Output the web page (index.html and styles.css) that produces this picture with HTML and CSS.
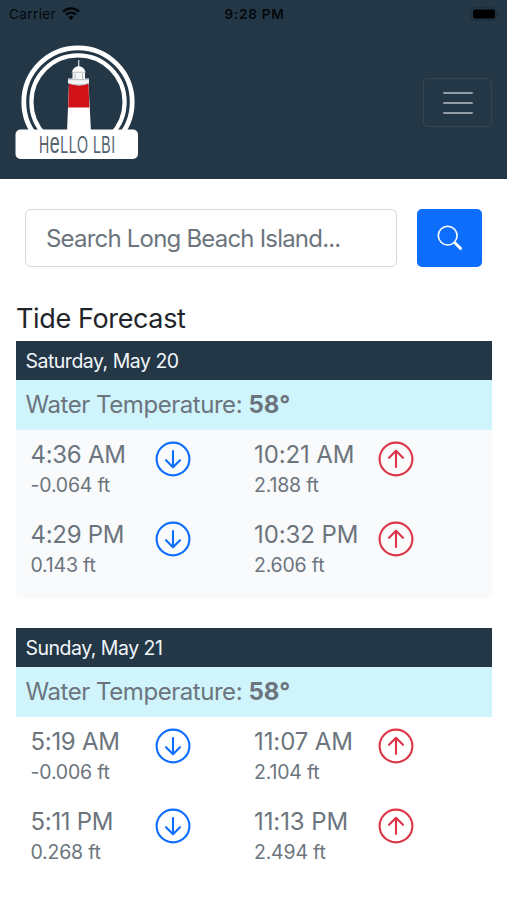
FILE: index.html
```html
<!DOCTYPE html>
<html lang="en">
<head>
<meta charset="utf-8">
<title>Hello LBI</title>
<link rel="stylesheet" href="styles.css">
</head>
<body>
<svg class="symbols" aria-hidden="true">
  <symbol id="down" viewBox="0 0 36 36"><circle cx="18" cy="18" r="16.400"/><path d="M18 10v16M11 19.200l7 7 7-7"/></symbol>
  <symbol id="up" viewBox="0 0 36 36"><circle cx="18" cy="18" r="16.400"/><path d="M18 26V10M11 16.800l7-7 7 7"/></symbol>
</svg>
<header class="navbar">
  <div class="status">
    <div class="carrier"><span>Carrier</span>
      <svg width="18" height="13" viewBox="0 0 18 13"><path d="M1 4.700C5.500.3 12.500.3 17 4.700M4 7.700c3-2.700 7-2.700 10 0" fill="none" stroke="#020609" stroke-width="2.400"/><path d="M6.200 10Q9 7.600 11.800 10L9 12.900z" fill="#020609"/></svg>
    </div>
    <div class="clock">9:28 PM</div>
    <svg class="battery" width="30" height="14" viewBox="0 0 30 14"><rect x=".8" y=".8" width="25.400" height="12.400" rx="4" fill="none" stroke="#1c2c38"/><rect x="3" y="2.600" width="22" height="9" rx="2" fill="#000"/><path d="M28 5q1.500 2 0 4z" fill="#152431"/></svg>
  </div>
  <div class="brand-row">
    <svg class="logo" width="124" height="116" viewBox="0 0 124 116">
      <g fill="none" stroke="#fff"><circle cx="63" cy="57" r="54.200" stroke-width="4.800"/><circle cx="63" cy="57" r="46.600" stroke-width="4.200"/></g>
      <path d="M54 38h19.500l2.500 49H52z" fill="#fff"/>
      <path d="M54 39h19.500l.8 23.500H53.200z" fill="#d01118"/>
      <path d="M63.700 15v8" stroke="#dfe4e7" stroke-width="1.200"/>
      <path d="M57 27q1-5 6.700-6 5.700 1 6.700 6z" fill="#fff"/>
      <path d="M57.500 27h12.500v6.500h4v5q-10.300 4-21-.2v-4.800h4.500z" fill="#f5f6f6"/>
      <path d="M56.500 27.200h14.500M60 28.500v6M67.500 28.500v6M53 34.700h21M53.500 38.300q10 3.400 20 0" fill="none" stroke="#a7afb4" stroke-width=".8"/>
      <rect x=".5" y="84.500" width="122.500" height="29.500" rx="5" fill="#fff"/>
      <text class="logo-text" transform="translate(24 107.500) scale(.6 1)">H<tspan class="logo-e">e</tspan>LLO LBI</text>
    </svg>
    <button class="toggler" aria-label="Menu"><i></i><i></i><i></i></button>
  </div>
</header>
<main>
  <form class="search">
    <input type="text" placeholder="Search Long Beach Island...">
    <button type="button" aria-label="Search"><svg width="26" height="26" viewBox="0 0 26 26"><circle cx="10.700" cy="10.600" r="9.400" fill="none" stroke="#fff" stroke-width="1.600"/><path d="M17.800 17.800l5.700 5.600" stroke="#fff" stroke-width="2.900" stroke-linecap="round"/></svg></button>
  </form>
  <h1>Tide Forecast</h1>
  <section class="day shaded">
    <h2>Saturday, May 20</h2>
    <p class="water">Water Temperature: <b>58°</b></p>
    <div class="tides">
      <div class="tide"><div><div class="time">4:36 AM</div><div class="feet">-0.064 ft</div></div><svg class="low"><use href="#down"/></svg></div>
      <div class="tide"><div><div class="time">10:21 AM</div><div class="feet">2.188 ft</div></div><svg class="high"><use href="#up"/></svg></div>
      <div class="tide"><div><div class="time">4:29 PM</div><div class="feet">0.143 ft</div></div><svg class="low"><use href="#down"/></svg></div>
      <div class="tide"><div><div class="time">10:32 PM</div><div class="feet">2.606 ft</div></div><svg class="high"><use href="#up"/></svg></div>
    </div>
  </section>
  <section class="day">
    <h2>Sunday, May 21</h2>
    <p class="water">Water Temperature: <b>58°</b></p>
    <div class="tides">
      <div class="tide"><div><div class="time">5:19 AM</div><div class="feet">-0.006 ft</div></div><svg class="low"><use href="#down"/></svg></div>
      <div class="tide"><div><div class="time">11:07 AM</div><div class="feet">2.104 ft</div></div><svg class="high"><use href="#up"/></svg></div>
      <div class="tide"><div><div class="time">5:11 PM</div><div class="feet">0.268 ft</div></div><svg class="low"><use href="#down"/></svg></div>
      <div class="tide"><div><div class="time">11:13 PM</div><div class="feet">2.494 ft</div></div><svg class="high"><use href="#up"/></svg></div>
    </div>
  </section>
</main>
</body>
</html>
```
FILE: styles.css
```css
* { box-sizing: border-box; }
body { margin: 0; height: 900px; overflow: hidden; background: #fff; color: #212529; font-family: Inter, sans-serif; }
.symbols { display: none; }
h1, h2, p { margin: 0; font-weight: 400; }
.navbar { height: 179px; background: #243746; }
.status { display: grid; grid-template-columns: 1fr auto 1fr; align-items: center; height: 27px; padding: 0 7px 0 9px; color: #03080c; }
.carrier { display: flex; align-items: center; gap: 6px; font-size: 13.500px; letter-spacing: .4px; }
.clock { font-size: 13.500px; font-weight: 600; letter-spacing: .8px; }
.battery { justify-self: end; }
.brand-row { display: flex; justify-content: space-between; align-items: flex-start; padding: 18px 15px 0; }
.logo-text { font-family: "Liberation Sans", sans-serif; font-size: 23.500px; letter-spacing: .9px; fill: #53616c; }
.logo-e { font-size: 30px; }
.toggler { width: 69px; height: 49px; margin-top: 33px; padding: 0; border: 1.500px solid #344653; border-radius: 5px; background: none; display: flex; flex-direction: column; align-items: center; justify-content: center; gap: 8px; }
.toggler i { width: 30px; height: 2px; background: #929ba3; border-radius: 1px; }
main { padding: 29.500px 15px 0; }
.search { display: flex; gap: 20px; padding: 0 10px; height: 58.500px; }
.search input { width: 372px; padding: 2px 20px 0; border: 1.500px solid #d5d9dd; border-radius: 6px; font: 24px Inter, sans-serif; letter-spacing: -.8px; outline: none; }
.search input::placeholder { color: #6c757d; opacity: 1; }
.search button { width: 66px; height: 58.500px; padding: 0; border: 0; border-radius: 5px; background: #0d6efd; display: flex; align-items: center; justify-content: center; }
h1 { margin-top: 34.500px; height: 39px; padding-left: 1px; line-height: 34px; font-size: 27px; letter-spacing: -.37px; }
.day { height: 258.500px; margin: 0 0 28.500px .5px; width: 476.500px; border-radius: 0 0 5px 5px; }
.shaded { background: #f8fafc; }
h2 { height: 39px; padding-left: 10px; line-height: 40px; background: #243746; color: #f1f6f9; font-size: 19.500px; letter-spacing: -.5px; }
.water { height: 50.500px; padding-left: 10px; line-height: 49px; background: #cff4fc; color: #6c757d; font-size: 24px; letter-spacing: -.45px; }
.water b { font-weight: 700; letter-spacing: 0; }
.tides { display: grid; grid-template-columns: 223.500px 223.500px; grid-auto-rows: 79.500px; padding: 11px 15px 0; color: #6c757d; }
.tide { display: grid; grid-template-columns: 124px 36px; align-items: start; white-space: nowrap; }
.time { font-size: 24px; line-height: 29px; margin-top: -1px; letter-spacing: -.3px; }
.tide:nth-child(even) .time { letter-spacing: -.1px; }
.feet { font-size: 19.500px; line-height: 24px; margin-top: 4px; letter-spacing: -.2px; }
.tide svg { width: 36px; height: 36px; fill: none; stroke-width: 2.100; stroke-linecap: round; stroke-linejoin: round; }
.low { stroke: #0d6efd; }
.high { stroke: #dc3545; }
```
